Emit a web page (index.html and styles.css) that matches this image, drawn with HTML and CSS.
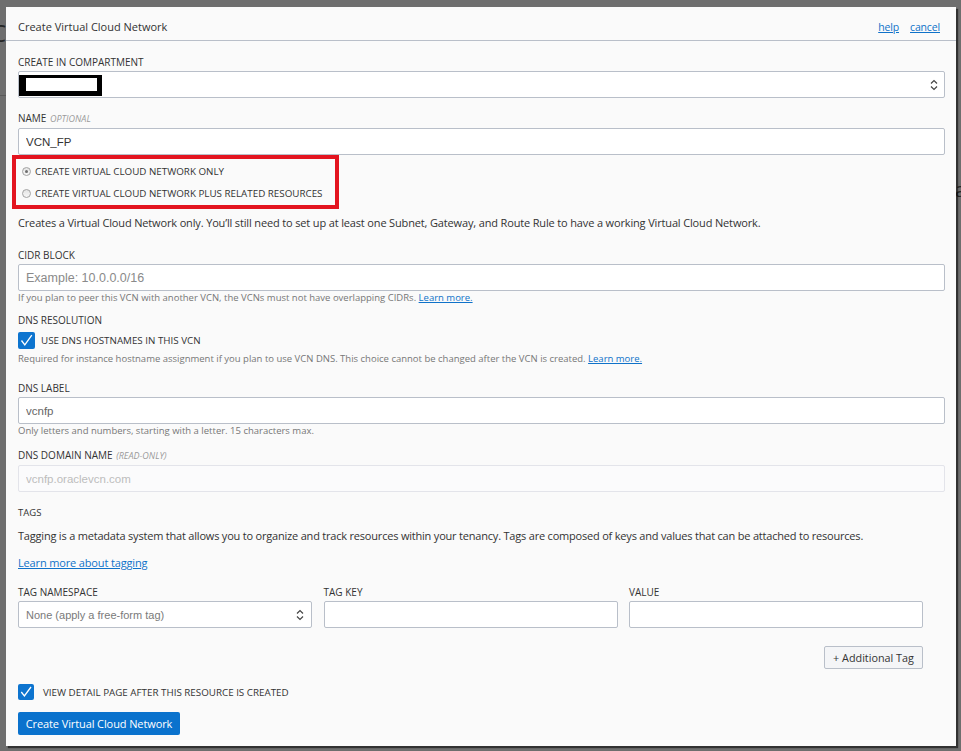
FILE: index.html
```html
<!DOCTYPE html>
<html lang="en">
<head>
    <meta charset="UTF-8">
    <meta name="viewport" content="width=device-width, initial-scale=1.0">
    <title>Create Virtual Cloud Network</title>
    <link rel="stylesheet" href="styles.css">
</head>
<body>

    <!-- bits of the page behind the dialog -->
    <div class="behind">
        <span class="behind-title">C</span>
        <span class="behind-rule"></span>
        <span class="behind-letter">a</span>
    </div>

    <div class="modal">
        <div class="modal-head">
            <span class="modal-title">Create Virtual Cloud Network</span>
            <span class="modal-links"><a href="#">help</a><a href="#">cancel</a></span>
        </div>

        <form class="modal-body">
            <div class="label">Create in Compartment</div>
            <div class="select">
                <span class="redacted"></span>
                <svg class="arrows" width="8" height="12" viewBox="0 0 8 12"><path d="M1 4.5L4 1.5L7 4.5M1 7.5L4 10.5L7 7.5" fill="none" stroke="#444" stroke-width="1.2"/></svg>
            </div>

            <div class="label gap-name">Name <em>optional</em></div>
            <input class="input value" type="text" value="VCN_FP">

            <div class="choice-box">
                <label class="radio"><span class="dot checked"></span>Create Virtual Cloud Network Only</label>
                <label class="radio"><span class="dot"></span>Create Virtual Cloud Network Plus Related Resources</label>
            </div>

            <p class="desc gap-desc">Creates a Virtual Cloud Network only. You’ll still need to set up at least one Subnet, Gateway, and Route Rule to have a working Virtual Cloud Network.</p>

            <div class="label gap-cidr">CIDR Block</div>
            <input class="input" type="text" placeholder="Example: 10.0.0.0/16">
            <div class="help">If you plan to peer this VCN with another VCN, the VCNs must not have overlapping CIDRs. <a href="#">Learn more.</a></div>

            <div class="label gap-dns">DNS Resolution</div>
            <label class="check gap-check">
                <span class="box"><svg width="17" height="17" viewBox="0 0 17 17"><path d="M3.5 8.5L6.8 12.8L13.8 3.2" fill="none" stroke="#fff" stroke-width="1.3"/></svg></span>
                Use DNS Hostnames in this VCN
            </label>
            <div class="help gap-help">Required for instance hostname assignment if you plan to use VCN DNS. This choice cannot be changed after the VCN is created. <a href="#">Learn more.</a></div>

            <div class="label gap-dnslabel">DNS Label</div>
            <input class="input value value-gray" type="text" value="vcnfp">
            <div class="help">Only letters and numbers, starting with a letter. 15 characters max.</div>

            <div class="label gap-domain">DNS Domain Name <em>(read-only)</em></div>
            <input class="input value" type="text" value="vcnfp.oraclevcn.com" disabled>

            <div class="label small gap-tags">Tags</div>
            <p class="desc gap-tagtext">Tagging is a metadata system that allows you to organize and track resources within your tenancy. Tags are composed of keys and values that can be attached to resources.</p>
            <p class="desc gap-taglink"><a href="#">Learn more about tagging</a></p>

            <div class="tag-area">
                <div class="tag-row">
                    <div>
                        <div class="label">Tag Namespace</div>
                        <div class="select ns">
                            <span>None (apply a free-form tag)</span>
                            <svg class="arrows" width="8" height="12" viewBox="0 0 8 12"><path d="M1 4.5L4 1.5L7 4.5M1 7.5L4 10.5L7 7.5" fill="none" stroke="#444" stroke-width="1.2"/></svg>
                        </div>
                    </div>
                    <div>
                        <div class="label">Tag Key</div>
                        <input class="input" type="text">
                    </div>
                    <div>
                        <div class="label">Value</div>
                        <input class="input" type="text">
                    </div>
                </div>
                <div class="tag-actions">
                    <button type="button" class="btn-secondary">+ Additional Tag</button>
                </div>
            </div>

            <label class="check gap-view">
                <span class="box small-box"><svg width="16" height="16" viewBox="0 0 16 16"><path d="M3.3 8L6.4 12L13 3" fill="none" stroke="#fff" stroke-width="1.3"/></svg></span>
                View detail page after this resource is created
            </label>

            <button type="button" class="btn-primary">Create Virtual Cloud Network</button>
        </form>
    </div>

</body>
</html>
```

FILE: styles.css
```css
* {
    box-sizing: border-box;
}
html, body {
    margin: 0;
    height: 100%;
}
body {
    position: relative;
    overflow: hidden;
    background: #6e6e6e;
    font-family: "Open Sans", sans-serif;
    color: #333;
}
a {
    color: #0f72c9;
}

/* page under the overlay */
.behind-title {
    position: absolute;
    left: -9px;
    top: 16px;
    font-size: 24px;
    color: #262626;
}
.behind-rule {
    position: absolute;
    left: 0;
    top: 95px;
    width: 8px;
    height: 1px;
    background: #5a5a5a;
}
.behind-letter {
    position: absolute;
    left: 955px;
    top: 176px;
    font-size: 20px;
    color: #262626;
}

/* dialog */
.modal {
    position: absolute;
    left: 6px;
    top: 7px;
    width: 950px;
    height: 739px;
    background: #fafafa;
    box-shadow: 2px 2px 1px rgba(0, 0, 0, 0.55);
}
.modal-head {
    display: flex;
    justify-content: space-between;
    align-items: baseline;
    padding: 12px 16px 5px 12px;
    font-size: 11px;
    line-height: 16px;
    border-bottom: 1px solid #b9bfc9;
}
.modal-title {
    color: #333;
}
.modal-links a {
    margin-left: 11px;
    font-size: 10.5px;
    letter-spacing: -0.15px;
}
.modal-body {
    padding: 14px 11px 0 12px;
}

.label {
    font-size: 10px;
    line-height: 14px;
    text-transform: uppercase;
    color: #333;
    margin-bottom: 2px;
}
.label em {
    font-size: 9px;
    color: #9a9a9a;
    margin-left: 1px;
}
.label.small {
    font-size: 9.5px;
}

.input, .select {
    display: block;
    width: 100%;
    height: 27px;
    margin: 0;
    padding: 0 7px;
    border: 1px solid #b9bfc9;
    border-radius: 2px;
    background: #fff;
    font-family: "Liberation Sans", Arial, sans-serif;
    font-size: 12.5px;
    color: #333;
    outline: none;
}
.input.value {
    font-size: 11.5px;
}
.input::placeholder {
    color: #8a8a8a;
}
.input.value-gray {
    color: #666;
}
.input:disabled {
    background: #fbfbfc;
    border-color: #e3e4ea;
    color: #bdbdbd;
}
.select {
    display: flex;
    align-items: center;
    justify-content: space-between;
    padding: 0 6px 0 0;
}
.select.ns {
    padding: 0 7px;
    font-size: 11px;
    color: #7a7a7a;
}
.redacted {
    width: 83px;
    height: 21px;
    margin-top: 2px;
    border-style: solid;
    border-color: #000;
    border-width: 3px 5px 5px 7px;
    background: #fff;
}

.gap-name { margin-top: 13px; }

.choice-box {
    width: 327px;
    margin-left: -6px;
    padding: 1px 0 1px 6px;
    border: 4px solid #e3141f;
}
.radio {
    display: flex;
    align-items: center;
    height: 22px;
    font-size: 9.8px;
    text-transform: uppercase;
    color: #333;
}
.dot {
    width: 9px;
    height: 9px;
    margin-right: 4px;
    border: 1px solid #a2a2a2;
    border-radius: 50%;
    background: linear-gradient(#e4e4e4, #f7f7f7);
    display: flex;
    align-items: center;
    justify-content: center;
}
.dot.checked::after {
    content: "";
    width: 3px;
    height: 3px;
    border-radius: 50%;
    background: #6d6d6d;
}

.desc {
    margin: 0;
    font-size: 11px;
    line-height: 16px;
    letter-spacing: -0.15px;
    color: #333;
}
.gap-desc { margin-top: 6px; }
.gap-cidr { margin-top: 17px; }

.help {
    margin-top: 1px;
    font-size: 9.5px;
    line-height: 12px;
    color: #777;
}
.gap-dns { margin-top: 9px; }

.check {
    display: flex;
    align-items: center;
    font-size: 9.8px;
    text-transform: uppercase;
    color: #333;
}
.box {
    width: 17px;
    height: 17px;
    margin-right: 6px;
    border-radius: 2px;
    background: #0d74cf;
}
.box svg {
    display: block;
}
.box.small-box {
    width: 16px;
    height: 16px;
    margin-right: 9px;
}
.gap-check { margin-top: 5px; }
.gap-help { margin-top: 4px; }
.gap-dnslabel { margin-top: 16px; }
.gap-domain { margin-top: 11px; }
.gap-tags { margin-top: 14px; }
.gap-tagtext { margin-top: 8px; letter-spacing: -0.2px; }
.gap-taglink { margin-top: 11px; }

.tag-area {
    width: 905px;
    margin-top: 14px;
}
.tag-row {
    display: grid;
    grid-template-columns: 294px 294px 294px;
    column-gap: 11.5px;
}
.tag-actions {
    display: flex;
    justify-content: flex-end;
    margin-top: 18px;
}
.btn-secondary {
    height: 23px;
    width: 99px;
    padding: 0;
    border: 1px solid #b9bfc9;
    border-radius: 2px;
    background: #f4f5f7;
    font-family: "Open Sans", sans-serif;
    font-size: 10.8px;
    color: #333;
}
.gap-view { margin-top: 15px; }
.btn-primary {
    display: block;
    margin-top: 12px;
    width: 162px;
    height: 23px;
    padding: 0;
    border: none;
    border-radius: 2px;
    background: #0a72cd;
    font-family: "Open Sans", sans-serif;
    font-size: 11px;
    letter-spacing: -0.1px;
    white-space: nowrap;
    color: #fff;
}
```
